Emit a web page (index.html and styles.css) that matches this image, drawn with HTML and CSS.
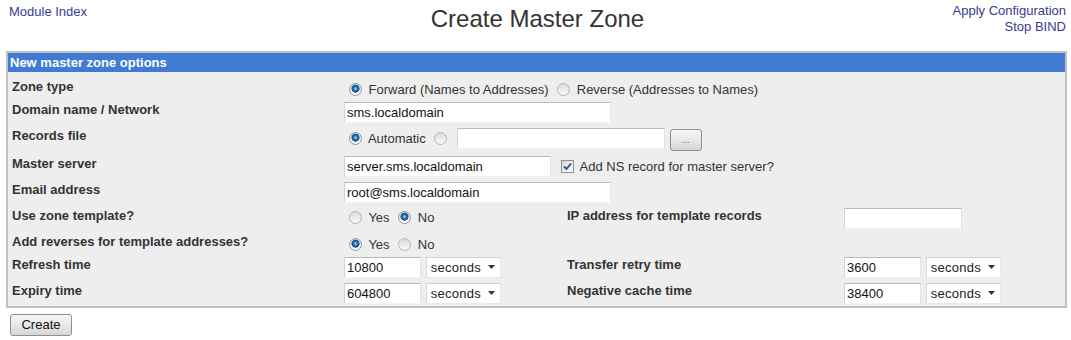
FILE: index.html
```html
<!DOCTYPE html>
<html lang="en">
<head>
    <meta charset="UTF-8">
    <title>Create Master Zone</title>
    <link rel="stylesheet" href="styles.css">
</head>
<body>
    <div class="topbar">
        <div class="links-left"><a href="#">Module Index</a></div>
        <h1 class="title">Create Master Zone</h1>
        <div class="links-right">
            <a href="#">Apply Configuration</a><br>
            <a href="#">Stop BIND</a>
        </div>
    </div>

    <form class="zone-form" onsubmit="return false">
        <div class="panel">
            <div class="panel-head">New master zone options</div>
            <div class="panel-body">
                <div class="label">Zone type</div>
                <div class="field choice span3">
                    <label><input type="radio" class="radio" name="rev" checked> Forward (Names to Addresses)</label>
                    <label><input type="radio" class="radio" name="rev"> Reverse (Addresses to Names)</label>
                </div>

                <div class="label">Domain name / Network</div>
                <div class="field span3"><input type="text" class="text w-long" value="sms.localdomain"></div>

                <div class="label">Records file</div>
                <div class="field span3">
                    <label><input type="radio" class="radio" name="file_def" checked> Automatic</label>
                    <input type="radio" class="radio" name="file_def">
                    <input type="text" class="text w-file" value="">
                    <button type="button" class="btn btn-small">...</button>
                </div>

                <div class="label">Master server</div>
                <div class="field span3">
                    <input type="text" class="text w-mid" value="server.sms.localdomain">
                    <label><input type="checkbox" class="check" checked> Add NS record for master server?</label>
                </div>

                <div class="label">Email address</div>
                <div class="field span3"><input type="text" class="text w-long" value="root@sms.localdomain"></div>

                <div class="label">Use zone template?</div>
                <div class="field">
                    <label><input type="radio" class="radio" name="tmpl"> Yes</label>
                    <label><input type="radio" class="radio" name="tmpl" checked> No</label>
                </div>
                <div class="label">IP address for template records</div>
                <div class="field"><input type="text" class="text w-ip" value=""></div>

                <div class="label">Add reverses for template addresses?</div>
                <div class="field choice span3">
                    <label><input type="radio" class="radio" name="onslave" checked> Yes</label>
                    <label><input type="radio" class="radio" name="onslave"> No</label>
                </div>

                <div class="label">Refresh time</div>
                <div class="field">
                    <input type="text" class="text w-num" value="10800">
                    <select class="units"><option>seconds</option><option>minutes</option><option>hours</option><option>days</option></select>
                </div>
                <div class="label">Transfer retry time</div>
                <div class="field">
                    <input type="text" class="text w-num" value="3600">
                    <select class="units"><option>seconds</option><option>minutes</option><option>hours</option><option>days</option></select>
                </div>

                <div class="label">Expiry time</div>
                <div class="field">
                    <input type="text" class="text w-num" value="604800">
                    <select class="units"><option>seconds</option><option>minutes</option><option>hours</option><option>days</option></select>
                </div>
                <div class="label">Negative cache time</div>
                <div class="field">
                    <input type="text" class="text w-num" value="38400">
                    <select class="units"><option>seconds</option><option>minutes</option><option>hours</option><option>days</option></select>
                </div>
            </div>
        </div>
        <div class="actions">
            <button type="submit" class="btn">Create</button>
        </div>
    </form>
</body>
</html>
```

FILE: styles.css
```css
body {
    margin: 0;
    font-family: "Liberation Sans", Arial, sans-serif;
    font-size: 13px;
    color: #333;
    background-color: #fff;
}
a {
    color: #3a3a94;
    text-decoration: none;
}
.topbar {
    display: grid;
    grid-template-columns: 1fr auto 1fr;
    height: 51px;
    padding: 0 5px 0 9px;
}
.links-left {
    padding-top: 4px;
    line-height: 15px;
}
.links-right {
    padding-top: 3px;
    line-height: 16px;
    text-align: right;
}
.title {
    margin: 0;
    padding-top: 5px;
    font-size: 24px;
    font-weight: normal;
    line-height: 28px;
    color: #333;
}
.panel {
    margin: 0 4px 0 6px;
    border: 2px solid #c0c0c0;
    background-color: #eeeeee;
}
.panel-head {
    background-color: #3f7bd2;
    color: #fff;
    font-weight: bold;
    line-height: 15px;
    padding: 2px;
}
.panel-body {
    display: grid;
    grid-template-columns: 332px 223px 277px 1fr;
    row-gap: 3px;
    padding: 6px 4px 1px 4px;
}
.label {
    font-weight: bold;
    line-height: 15px;
    padding: 1px 0;
}
.field {
    padding: 1px 0;
    white-space: nowrap;
}
.choice {
    padding-top: 2px;
}
.span3 {
    grid-column: span 3;
}
.text {
    box-sizing: border-box;
    height: 21px;
    margin: 0;
    padding: 1px 2px;
    font-family: "Liberation Sans", Arial, sans-serif;
    font-size: 13px;
    color: #111;
    background-color: #fff;
    border: 1px solid;
    border-color: #b9b9b9 #e2e2e2 #f3f3f3 #d4d4d4;
    outline: none;
}
.w-long { width: 267px; }
.w-mid { width: 207px; }
.w-file { width: 208px; margin-left: 3px; }
.w-ip { width: 118px; }
.w-num { width: 77px; }
.radio {
    appearance: none;
    box-sizing: border-box;
    width: 13px;
    height: 13px;
    margin: 3px 3px 0 5px;
    vertical-align: -2px;
    border: 1px solid #b4b4b4;
    border-radius: 50%;
    background: linear-gradient(#dcdcdc, #fafafa);
}
.radio:checked {
    border-color: #8c9aab;
    background: radial-gradient(circle at 50% 42%, #a8e4fb 0, #3b8fcf 1.5px, #1b4f86 3px, #2c5f95 3.8px, transparent 4.3px),
        linear-gradient(#dcdcdc, #fafafa);
}
.check {
    appearance: none;
    box-sizing: border-box;
    width: 13px;
    height: 13px;
    margin: 0 3px 0 6px;
    vertical-align: -2px;
    border: 1px solid #8f8f8f;
    background: linear-gradient(135deg, #d8d8d8, #fdfdfd);
}
.check:checked {
    background: url("data:image/svg+xml,%3Csvg xmlns='http://www.w3.org/2000/svg' width='11' height='11'%3E%3Cpath d='M2 5.5 L4.5 8 L9 2.5' stroke='%232a4f9c' stroke-width='1.8' fill='none'/%3E%3C/svg%3E") no-repeat center,
        linear-gradient(135deg, #d8d8d8, #fdfdfd);
}
.units {
    appearance: none;
    box-sizing: border-box;
    width: 75px;
    height: 21px;
    margin: 0 0 0 1px;
    padding: 0 0 0 4px;
    font-family: "Liberation Sans", Arial, sans-serif;
    font-size: 13px;
    letter-spacing: 0.3px;
    color: #222;
    border: 1px solid;
    border-color: #d0d0d0 #e8e8e8 #e8e8e8 #d8d8d8;
    background: #fff url("data:image/svg+xml,%3Csvg xmlns='http://www.w3.org/2000/svg' width='7' height='4'%3E%3Cpolygon points='0,0 7,0 3.5,4' fill='%23333'/%3E%3C/svg%3E") no-repeat right 5px center;
}
.btn {
    box-sizing: border-box;
    height: 22px;
    padding: 0 10px;
    font-family: "Liberation Sans", Arial, sans-serif;
    font-size: 13px;
    color: #111;
    border: 1px solid #8e8e8e;
    border-radius: 3px;
    background: linear-gradient(#f6f6f6 0%, #e8e8e8 50%, #d6d6d6 100%);
}
.btn-small {
    width: 32px;
    height: 22px;
    margin-left: 1px;
    padding: 0;
    font-size: 10px;
    color: #777;
}
.actions {
    padding: 6px 0 0 10px;
}
.actions .btn {
    width: 62px;
}
```
